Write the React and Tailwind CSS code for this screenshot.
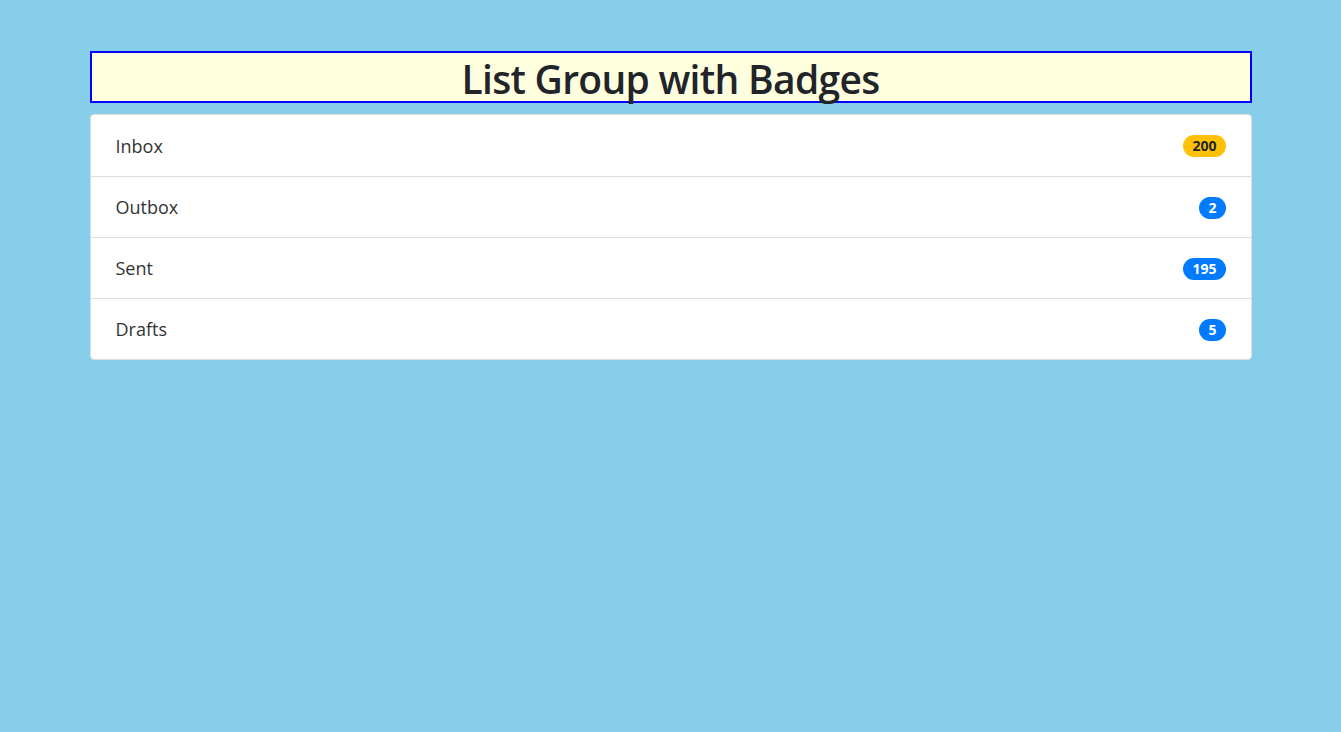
import React from "react";

const items = [
  { name: "Inbox", count: 200, color: "bg-[#ffc107] text-[#212529]" },
  { name: "Outbox", count: 2, color: "bg-[#007bff] text-white" },
  { name: "Sent", count: 195, color: "bg-[#007bff] text-white" },
  { name: "Drafts", count: 5, color: "bg-[#007bff] text-white" },
];

export default function App() {
  return (
    <div className="min-h-[732px] bg-[#87ceeb] pt-[51px] font-['Open_Sans',sans-serif] text-[#212529]">
      <div className="mx-auto w-[1162px]">
        <h1 className="h-[52px] border-2 border-[#0000ff] bg-[#ffffe0] pt-[3px] text-center text-[39px] font-semibold leading-[46px] tracking-[-0.7px]">
          List Group with Badges
        </h1>
        <ul className="mt-[11px] overflow-hidden rounded-[4px] border border-[#dcdcdc] bg-white">
          {items.map((item, i) => (
            <li
              key={item.name}
              className={`flex h-[61px] items-center justify-between px-[25px] pt-[1px] text-[18px] text-[#333] ${
                i > 0 ? "border-t border-[#dcdcdc]" : ""
              }`}
            >
              <span>{item.name}</span>
              <span
                className={`rounded-full px-[9px] py-[3px] text-[14px] font-bold leading-[16px] ${item.color}`}
              >
                {item.count}
              </span>
            </li>
          ))}
        </ul>
      </div>
    </div>
  );
}
